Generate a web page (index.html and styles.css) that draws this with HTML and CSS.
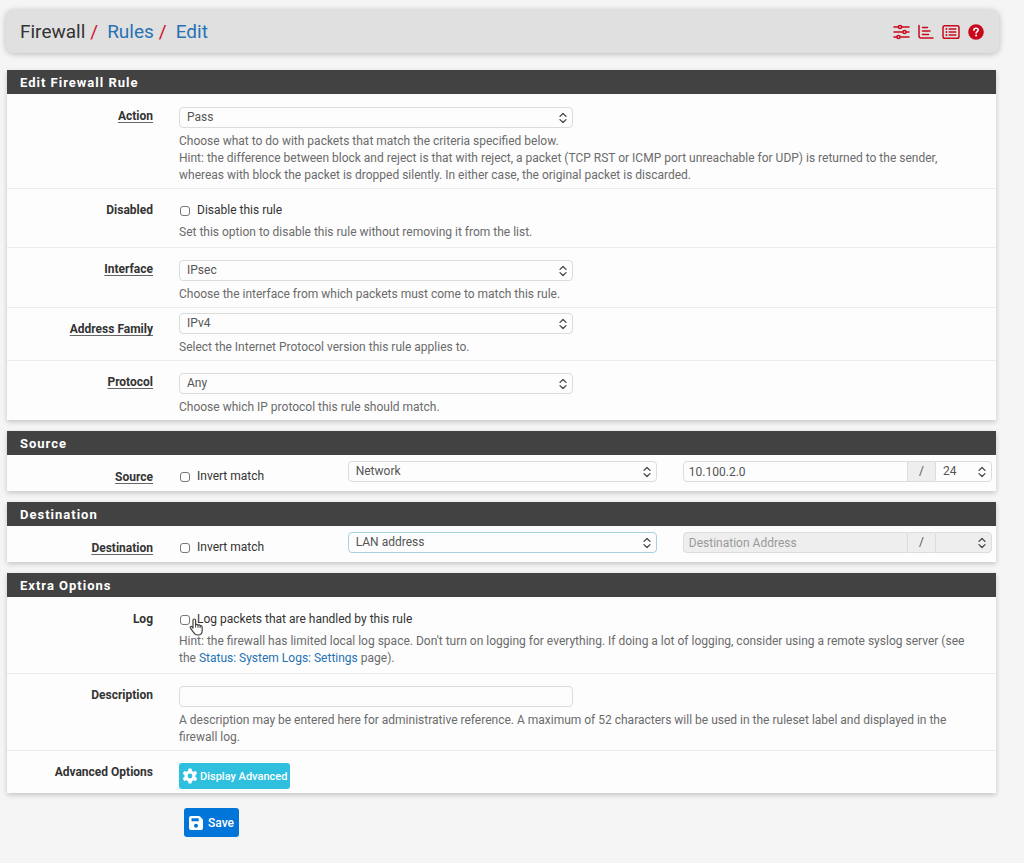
FILE: index.html
```html
<!DOCTYPE html>
<html lang="en">
<head>
<meta charset="utf-8">
<title>Firewall: Rules: Edit</title>
<link rel="stylesheet" href="styles.css">
</head>
<body>
<svg class="defs" aria-hidden="true">
  <symbol id="updown" viewBox="0 0 8 12"><path d="M1 4.4 4 1.5 7 4.4M1 7.6 4 10.5 7 7.6" fill="none" stroke="currentColor" stroke-width="1.3" stroke-linecap="round" stroke-linejoin="round"/></symbol>
</svg>
<header class="topbar">
  <nav class="crumbs" aria-label="Breadcrumb">
    <span>Firewall</span><i class="slash">/</i><a href="#rules">Rules</a><i class="slash">/</i><a href="#edit">Edit</a>
  </nav>
  <div class="tools">
    <a href="#settings" aria-label="Settings"><svg width="17" height="16" viewBox="0 0 17 16" fill="none" stroke="currentColor" stroke-width="1.5" stroke-linecap="round"><path d="M1 3h4M9 3h7M1 8h8.500M13.500 8H16M1 13h2.500M7.500 13H16"/><circle cx="7" cy="3" r="1.600"/><circle cx="11.500" cy="8" r="1.600"/><circle cx="5.500" cy="13" r="1.600"/></svg></a>
    <a href="#status" aria-label="Status"><svg width="16" height="16" viewBox="0 0 16 16" fill="none" stroke="currentColor" stroke-width="1.5" stroke-linecap="round"><path d="M1 1.500v10.500a2 2 0 0 0 2 2h12M4.500 3.500h5M4.500 7h7.500M4.500 10.500h6"/></svg></a>
    <a href="#logs" aria-label="Logs"><svg width="18" height="16" viewBox="0 0 18 16" fill="none" stroke="currentColor" stroke-width="1.500" stroke-linecap="round"><rect x="1" y="1.750" width="16" height="12.500" rx="1.800"/><path d="M7.200 5h6.600M7.200 8h6.600M7.200 11h6.600"/><path d="M4.400 5h.1M4.400 8h.1M4.400 11h.1" stroke-width="1.800"/></svg></a>
    <a href="#help" aria-label="Help"><svg width="16" height="16" viewBox="0 0 16 16"><circle cx="8" cy="8" r="7.800" fill="currentColor"/><path d="M5.800 6.100c.1-1.200 1-1.900 2.200-1.900 1.300 0 2.200.8 2.200 1.800 0 1.500-2.100 1.600-2.100 3" fill="none" stroke="#fff" stroke-width="1.600" stroke-linecap="round"/><circle cx="8.100" cy="11.500" r="1" fill="#fff"/></svg></a>
  </div>
</header>

<main>
<form class="rule">
  <section class="panel">
    <h2>Edit Firewall Rule</h2>
    <div class="row">
      <label class="name linked" for="action">Action</label>
      <div class="field">
        <div class="pick half"><select id="action"><option>Pass</option><option>Block</option><option>Reject</option></select><svg><use href="#updown"/></svg></div>
        <p class="help">Choose what to do with packets that match the criteria specified below.<br>Hint: the difference between block and reject is that with reject, a packet (TCP RST or ICMP port unreachable for UDP) is returned to the sender, whereas with block the packet is dropped silently. In either case, the original packet is discarded.</p>
      </div>
    </div>
    <div class="row">
      <span class="name">Disabled</span>
      <div class="field">
        <label class="check"><input type="checkbox">Disable this rule</label>
        <p class="help">Set this option to disable this rule without removing it from the list.</p>
      </div>
    </div>
    <div class="row">
      <label class="name linked" for="iface">Interface</label>
      <div class="field">
        <div class="pick half"><select id="iface"><option>IPsec</option></select><svg><use href="#updown"/></svg></div>
        <p class="help">Choose the interface from which packets must come to match this rule.</p>
      </div>
    </div>
    <div class="row compact">
      <label class="name linked" for="family">Address Family</label>
      <div class="field">
        <div class="pick half"><select id="family"><option>IPv4</option><option>IPv6</option></select><svg><use href="#updown"/></svg></div>
        <p class="help">Select the Internet Protocol version this rule applies to.</p>
      </div>
    </div>
    <div class="row">
      <label class="name linked" for="proto">Protocol</label>
      <div class="field">
        <div class="pick half"><select id="proto"><option>Any</option></select><svg><use href="#updown"/></svg></div>
        <p class="help">Choose which IP protocol this rule should match.</p>
      </div>
    </div>
  </section>

  <section class="panel">
    <h2>Source</h2>
    <div class="row compact">
      <span class="name linked">Source</span>
      <div class="field triple">
        <label class="check"><input type="checkbox">Invert match</label>
        <div class="pick"><select aria-label="Source type"><option>Network</option></select><svg><use href="#updown"/></svg></div>
        <div class="address">
          <input class="text" type="text" value="10.100.2.0" aria-label="Source address">
          <span class="addon">/</span>
          <div class="pick mask"><select aria-label="Source mask"><option>24</option></select><svg><use href="#updown"/></svg></div>
        </div>
      </div>
    </div>
  </section>

  <section class="panel">
    <h2>Destination</h2>
    <div class="row compact">
      <span class="name linked">Destination</span>
      <div class="field triple">
        <label class="check"><input type="checkbox">Invert match</label>
        <div class="pick active"><select aria-label="Destination type"><option>LAN address</option></select><svg><use href="#updown"/></svg></div>
        <div class="address">
          <input class="text" type="text" placeholder="Destination Address" aria-label="Destination address" disabled>
          <span class="addon">/</span>
          <div class="pick mask"><select aria-label="Destination mask" disabled><option></option></select><svg><use href="#updown"/></svg></div>
        </div>
      </div>
    </div>
  </section>

  <section class="panel">
    <h2>Extra Options</h2>
    <div class="row">
      <span class="name">Log</span>
      <div class="field">
        <label class="check"><input type="checkbox">Log packets that are handled by this rule
          <svg class="pointer" width="15" height="18" viewBox="0 0 15 18"><path d="M4 10V2.300a1.300 1.300 0 0 1 2.600 0V7c.4-.9 2.200-.8 2.400.3.600-.8 2.100-.5 2.200.6.700-.6 2 0 2 1.200v3.400c0 2.800-1.500 4.500-4.300 4.500-2.600 0-3.600-1-4.800-3.200L1.300 9.800c-.6-1.100.9-2 1.700-1z" fill="#fff" stroke="#444" stroke-width="1.200" stroke-linejoin="round"/><path d="M6.600 7v2.500M9 7.500v2.300M11.200 8v2" stroke="#444" stroke-width="1"/></svg>
        </label>
        <p class="help">Hint: the firewall has limited local log space. Don't turn on logging for everything. If doing a lot of logging, consider using a remote syslog server (see the <a href="#syslog">Status: System Logs: Settings</a> page).</p>
      </div>
    </div>
    <div class="row">
      <label class="name" for="descr">Description</label>
      <div class="field">
        <input class="text half" id="descr" type="text">
        <p class="help">A description may be entered here for administrative reference. A maximum of 52 characters will be used in the ruleset label and displayed in the firewall log.</p>
      </div>
    </div>
    <div class="row">
      <span class="name">Advanced Options</span>
      <div class="field">
        <button class="btn info" type="button"><svg width="16" height="16" viewBox="0 0 16 16"><g fill="#fff"><rect x="6.200" y=".5" width="3.600" height="15" rx="1"/><rect x="6.200" y=".5" width="3.600" height="15" rx="1" transform="rotate(60 8 8)"/><rect x="6.200" y=".5" width="3.600" height="15" rx="1" transform="rotate(120 8 8)"/><circle cx="8" cy="8" r="5.600"/></g><circle cx="8" cy="8" r="2.400" fill="#2fbfdf"/></svg>Display Advanced</button>
      </div>
    </div>
  </section>

  <button class="btn save" type="button"><svg width="14" height="14" viewBox="0 0 14 14"><path fill="#fff" fill-rule="evenodd" d="M2 0h7.700c.6 0 1 .2 1.400.6l2.300 2.300c.4.400.6.800.6 1.400V12a2 2 0 0 1-2 2H2a2 2 0 0 1-2-2V2a2 2 0 0 1 2-2zm.5 2.200v3.100h7.200V2.200zM7 7.700a2 2 0 1 0 0 4 2 2 0 0 0 0-4z"/></svg>Save</button>
</form>
</main>
</body>
</html>
```

FILE: styles.css
```css
* { box-sizing: border-box; }
body {
  margin: 0;
  padding: 10px 28px 24px 7px;
  background: #f5f5f5;
  color: #333;
  font: 12px/17px Roboto, "Liberation Sans", sans-serif;
}
a { color: #2672b4; text-decoration: none; }
.defs { display: none; }

.topbar {
  display: flex;
  align-items: center;
  justify-content: space-between;
  min-height: 43px;
  margin: 0 -3px 17px -1px;
  padding: 0 15px 0 14px;
  border-radius: 8px;
  background: #e0e0e0;
  box-shadow: 0 1px 6px rgba(0, 0, 0, .25);
}
.crumbs { display: flex; font-size: 19px; line-height: 24px; }
.slash { margin: 0 9px 0 5px; color: #d0112b; font-style: normal; }
.tools { display: flex; align-items: center; gap: 8px; }
.tools a { display: flex; color: #c9081c; }

.panel {
  margin-bottom: 11px;
  background: #fdfdfd;
  box-shadow: 0 2px 5px rgba(0, 0, 0, .2);
}
.panel h2 {
  margin: 0;
  padding: 1px 13px 0;
  background: #424242;
  color: #fff;
  font-size: 13px;
  line-height: 23px;
  font-weight: 700;
  letter-spacing: 1px;
}
.row {
  display: grid;
  grid-template-columns: 146px 1fr;
  column-gap: 26px;
  padding: 0 4px 4px 0;
  border-top: 1px solid transparent;
}
.row + .row { border-color: #ececec; }
.name {
  justify-self: end;
  align-self: start;
  margin-top: 13px;
  font-weight: 700;
}
.linked {
  text-decoration: underline #666;
  text-underline-offset: 2px;
  text-decoration-skip-ink: none;
}
.field { padding-top: 12px; min-width: 0; }
.compact .field { padding-top: 5px; }
.half { width: calc(50% - 13px); }
.help { margin: 5px 0 0; padding-right: 12px; color: #6b6b6b; }
.check + .help { margin-top: 4px; padding-bottom: 2px; }

.pick { position: relative; }
.pick svg {
  position: absolute;
  top: 5px;
  right: 6px;
  width: 8px;
  height: 12px;
  color: #444;
  pointer-events: none;
}
select, .text {
  display: block;
  width: 100%;
  height: 21px;
  margin: 0;
  padding: 0 7px;
  border: 1px solid #dcdcdc;
  border-radius: 4px;
  background: #fdfdfd;
  color: #555;
  font: inherit;
  appearance: none;
}
.text { padding: 0 5px; }
.text.half { width: calc(50% - 13px); }
.active select { border-color: #a9cfe3; }
select:disabled, .text:disabled { background: #eee; opacity: 1; }
.text::placeholder { color: #999; }

.check { display: flex; align-items: center; position: relative; padding: 1px 0; }
.check input {
  appearance: none;
  width: 10px;
  height: 10px;
  margin: 0 7px 0 1px;
  border: 1px solid #777;
  border-radius: 3px;
  background: #fff;
}
.pointer { position: absolute; left: 10px; top: 8px; }

.triple {
  display: grid;
  grid-template-columns: 6fr 13fr 13fr;
  align-items: start;
  column-gap: 26px;
}
.triple .check { padding-top: 7px; padding-bottom: 2px; }
.address { display: flex; }
.address .text { flex: 1; min-width: 0; border-radius: 4px 0 0 4px; }
.addon {
  width: 27px;
  border: solid #dcdcdc;
  border-width: 1px 0;
  background: #eee;
  color: #555;
  line-height: 19px;
  text-align: center;
}
.mask { width: 57px; }
.mask select { border-radius: 0 4px 4px 0; }

.btn {
  display: flex;
  align-items: center;
  border: 0;
  border-radius: 3px;
  color: #fff;
  font-family: inherit;
  font-weight: 500;
}
.info { gap: 2px; height: 26px; padding: 0 3px; background: #2fbfdf; font-size: 11px; }
.save { gap: 5px; height: 29px; margin: 15px 0 0 177px; padding: 0 5px; background: #0275d8; font-size: 12px; }
```
